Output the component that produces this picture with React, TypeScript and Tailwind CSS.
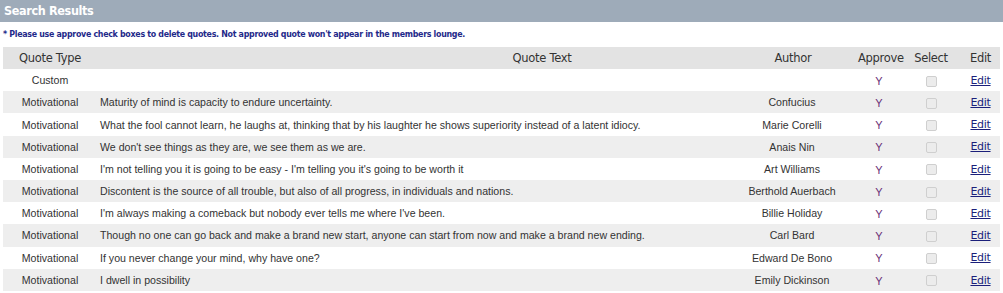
import React from 'react';

const quotes = [
  { type: 'Custom', text: '', author: '' },
  { type: 'Motivational', text: 'Maturity of mind is capacity to endure uncertainty.', author: 'Confucius' },
  { type: 'Motivational', text: 'What the fool cannot learn, he laughs at, thinking that by his laughter he shows superiority instead of a latent idiocy.', author: 'Marie Corelli' },
  { type: 'Motivational', text: "We don't see things as they are, we see them as we are.", author: 'Anais Nin' },
  { type: 'Motivational', text: "I'm not telling you it is going to be easy - I'm telling you it's going to be worth it", author: 'Art Williams' },
  { type: 'Motivational', text: 'Discontent is the source of all trouble, but also of all progress, in individuals and nations.', author: 'Berthold Auerbach' },
  { type: 'Motivational', text: "I'm always making a comeback but nobody ever tells me where I've been.", author: 'Billie Holiday' },
  { type: 'Motivational', text: 'Though no one can go back and make a brand new start, anyone can start from now and make a brand new ending.', author: 'Carl Bard' },
  { type: 'Motivational', text: 'If you never change your mind, why have one?', author: 'Edward De Bono' },
  { type: 'Motivational', text: 'I dwell in possibility', author: 'Emily Dickinson' },
];

const cols = 'grid grid-cols-[94px_631px_128px_46px_58px_41px]';

export default function App() {
  return (
    <div className="w-[1003px] h-[293px] bg-white overflow-hidden">
      {/* title bar */}
      <div className="h-[22px] bg-[#9eabb9] flex items-center px-[4px] pt-[1px]">
        <span className="text-white font-bold text-[12.5px] font-['DejaVu_Sans_Condensed','DejaVu_Sans',sans-serif] tracking-[-0.35px]">
          Search Results
        </span>
      </div>

      <p className="h-[22px] flex items-center pl-[3px] pt-[3px] text-[8.8px] font-bold text-[#1f2a8a] font-['DejaVu_Sans_Condensed','DejaVu_Sans',sans-serif] tracking-[-0.3px]">
        * Please use approve check boxes to delete quotes. Not approved quote won't appear in the members lounge.
      </p>

      <div className="mx-[3px] mt-[3px]">
        {/* column headings */}
        <div className={`${cols} h-[22px] items-center pt-[1px] bg-[#e3e3e3] text-[#333] text-[11.5px] font-['DejaVu_Sans',sans-serif] tracking-[-0.3px]`}>
          <div className="text-center">Quote Type</div>
          <div className="text-center pl-[259px]">Quote Text</div>
          <div className="text-center pl-[2px]">Author</div>
          <div className="text-center pl-[2px]">Approve</div>
          <div className="text-center">Select</div>
          <div className="text-center">Edit</div>
        </div>

        {quotes.map((q, i) => (
          <div
            key={i}
            className={`${cols} h-[22.2px] items-center pt-[2px] text-[10.6px] text-[#333] font-['Liberation_Sans',Arial,sans-serif] ${i % 2 === 0 ? 'bg-white' : 'bg-[#eeeeee]'}`}
          >
            <div className="text-center">{q.type}</div>
            <div className="pl-[3px] whitespace-nowrap">{q.text}</div>
            <div className="text-center">{q.author}</div>
            <div className="text-center text-[#6a2f77] text-[11px]">Y</div>
            <div className="flex justify-center">
              <span className="block w-[11px] h-[11px] rounded-[2px] border border-[#cfcfcf] bg-[#ececec]" />
            </div>
            <div className="text-center">
              <a href="#" className="text-[#1b1f7a] underline text-[11px] font-['DejaVu_Sans',sans-serif] tracking-[-0.3px]">
                Edit
              </a>
            </div>
          </div>
        ))}
      </div>
    </div>
  );
}
